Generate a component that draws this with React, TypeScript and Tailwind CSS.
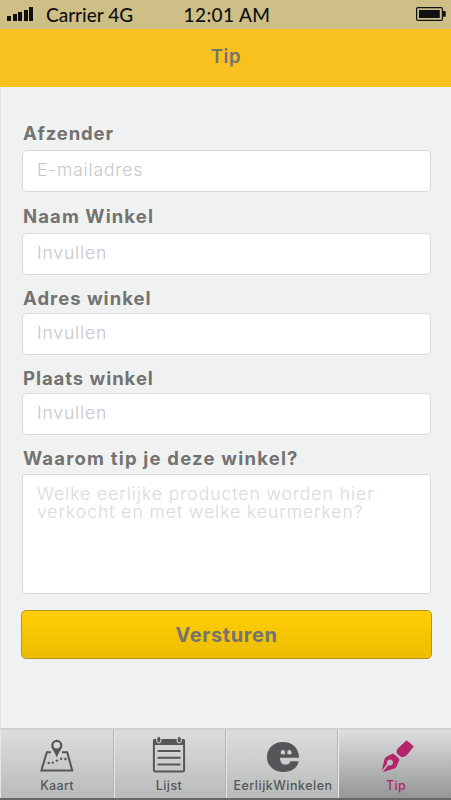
import type { ReactNode } from 'react';

type Field = { id: string; label: string; placeholder: string; spacing: string; tracking: string };

const fields: Field[] = [
  { id: 'afzender', label: 'Afzender', placeholder: 'E-mailadres', spacing: 'mt-0 *:first:leading-[23px]', tracking: 'tracking-[0.85px]' },
  { id: 'naam', label: 'Naam Winkel', placeholder: 'Invullen', spacing: 'mt-[13px] *:first:leading-[23px]', tracking: 'tracking-[1.1px]' },
  { id: 'adres', label: 'Adres winkel', placeholder: 'Invullen', spacing: 'mt-[10px] *:first:leading-[26px]', tracking: 'tracking-[1px]' },
  { id: 'plaats', label: 'Plaats winkel', placeholder: 'Invullen', spacing: 'mt-[10px] *:first:leading-[26px]', tracking: 'tracking-[0.95px]' },
];

function SignalBars() {
  return (
    <div className="-mt-[2px] flex h-[14px] w-[27px] items-end gap-[1.5px]">
      <i className="h-[5px] w-[4px] bg-[#111114]" />
      <i className="h-[7px] w-[4px] bg-[#111114]" />
      <i className="h-[9px] w-[4px] bg-[#111114]" />
      <i className="h-[11px] w-[4px] bg-[#111114]" />
      <i className="h-[14px] w-[4px] bg-[#111114]" />
    </div>
  );
}

function Battery() {
  return (
    <svg width="30" height="14" viewBox="0 0 30 14" className="-mt-[1px]">
      <rect x="0.6" y="0.6" width="25.8" height="12.8" rx="1.2" fill="none" stroke="#111114" strokeWidth="1.2" />
      <rect x="3" y="3" width="20.8" height="8" fill="#111114" />
      <path d="M27 4h2q.7 0 .7.7v4.4q0 .7-.7.7h-2z" fill="#111114" />
    </svg>
  );
}

function MapIcon() {
  return (
    <svg width="36" height="34" viewBox="0 0 36 34">
      <path d="M12 13.2H7.8L2.4 31.4H33.2L28.2 13.2H23" fill="none" stroke="#555659" strokeWidth="2" />
      <path d="M17.8 0.8a5.6 5.6 0 0 0-5.6 5.6c0 3.8 3.5 5.6 5.6 12.2 2.1-6.6 5.6-8.4 5.6-12.2a5.6 5.6 0 0 0-5.6-5.6z" fill="#555659" />
      <circle cx="17.8" cy="6.3" r="3.3" fill="#d6d8d8" />
      <g fill="#555659">
        <circle cx="9.7" cy="24" r="1.2" />
        <circle cx="13.8" cy="23.6" r="1.2" />
        <circle cx="17.9" cy="21.6" r="1.2" />
        <circle cx="22.2" cy="19.8" r="1.2" />
        <circle cx="26.4" cy="20" r="1.2" />
      </g>
    </svg>
  );
}

function ListIcon() {
  return (
    <svg width="34" height="37" viewBox="0 0 34 37">
      <rect x="1.9" y="4" width="30.2" height="31.6" rx="1.4" fill="none" stroke="#555659" strokeWidth="2" />
      <path d="M1 9V4.5Q1 3 2.5 3h29Q33 3 33 4.5V9z" fill="#555659" />
      <g fill="#555659" stroke="#d8dada" strokeWidth="1">
        <rect x="4.8" y="0.5" width="4" height="6.5" rx="2" />
        <rect x="25.2" y="0.5" width="4" height="6.5" rx="2" />
      </g>
      <path d="M5.5 15h23M5.5 21.7h23M5.5 28.4h23" stroke="#555659" strokeWidth="2" />
    </svg>
  );
}

function EerlijkIcon() {
  return (
    <svg width="34" height="32" viewBox="0 0 34 32">
      <path
        d="M33 16.8C33 7 26.5 1 17 1 7.6 1 1 7.2 1 16s6.8 15 16.3 15C25.5 31 31.5 27 32.6 20.3H24.4C23.8 22.4 21.9 23.7 19.4 23.7 16 23.7 14 21.2 14 16.8z"
        fill="#555659"
      />
      <path d="M14.9 13.2v-2.1a2.05 2.05 0 0 1 4.1 0v2.1zM21.3 13.2v-2.1a2.05 2.05 0 0 1 4.1 0v2.1z" fill="#d0d2d2" />
    </svg>
  );
}

function PenIcon() {
  return (
    <svg width="34" height="34" viewBox="0 0 34 34">
      <path d="M25.6 1.2L32.8 7.6 25.5 16.6Q23 18.4 20.8 17.9 16.5 16 15.6 13.2 15.2 11.3 16.8 9.5z" fill="#b3246b" />
      <path
        d="M11.8 14.6Q16 16.8 18.6 20.6L15.2 28.2Q13.8 29.6 11.8 30L1.5 33.2 7.4 26.2A3.1 3.1 0 1 0 6.1 24.7L.7 31.8 3.4 20.6Q3.8 18.5 5.5 17.7z"
        fill="#b3246b"
      />
    </svg>
  );
}

type TabProps = { icon: ReactNode; label: string; tracking: string; inset?: string; iconInset?: string; active?: boolean };

function Tab({ icon, label, tracking, inset = '', iconInset = '', active = false }: TabProps) {
  return (
    <button
      className={`flex flex-col items-center border-l bg-linear-to-b ${inset} ${
        active
          ? 'border-l-[#ececec] from-[#dedfdf] to-[#959698] text-[#b3246b]'
          : 'border-r border-r-[#b2b4b4] border-l-[#e4e5e5] from-[#dcdede] to-[#b9bbbb] text-[#555659]'
      }`}
    >
      <span className={`flex h-[43px] w-full items-end justify-center ${iconInset}`}>{icon}</span>
      <span className={`mt-[5px] text-[12.5px] leading-[16px] font-medium whitespace-nowrap ${tracking}`}>{label}</span>
    </button>
  );
}

export default function App() {
  return (
    <div className="flex h-[800px] w-[451px] flex-col overflow-hidden bg-[#f0f2f1] font-['Inter',sans-serif] text-[#737371]">
      <div className="grid h-[29px] shrink-0 grid-cols-[1fr_auto_1fr] items-center bg-[#cdbf86] pr-[5px] pl-[7px] font-['Lato',sans-serif] text-[19px] font-medium text-[#111114]">
        <div className="flex items-center gap-[12px]">
          <SignalBars />
          <span className="leading-[28px] whitespace-nowrap">Carrier 4G</span>
        </div>
        <span className="pl-[1px] leading-[28px] tracking-[0.4px] whitespace-nowrap">12:01 AM</span>
        <div className="flex justify-end">
          <Battery />
        </div>
      </div>

      <header className="flex h-[58px] shrink-0 items-center justify-center bg-[#f8c11d]">
        <h1 className="-mt-[3px] pl-[1px] text-[18.5px] font-semibold tracking-[0.6px]">Tip</h1>
      </header>

      <form className="flex flex-1 flex-col border-l border-[#e2e4e4] pt-[35px] pr-[20px] pl-[21px]">
        {fields.map((f) => (
          <div key={f.id} className={`flex flex-col ${f.spacing}`}>
            <label htmlFor={f.id} className={`h-[28px] pl-[1px] text-[18.5px] font-bold ${f.tracking}`}>
              {f.label}
            </label>
            <input
              id={f.id}
              placeholder={f.placeholder}
              className="h-[42px] rounded-[5px] border border-[#d8dada] bg-white px-[14px] pb-[3px] text-[17.5px] font-light tracking-[0.85px] placeholder:text-[#c6c6cb]"
            />
          </div>
        ))}
        <label htmlFor="waarom" className="mt-[11px] h-[28px] pl-[1px] text-[18.5px] leading-[24px] font-bold tracking-[1.2px]">
          Waarom tip je deze winkel?
        </label>
        <textarea
          id="waarom"
          placeholder={'Welke eerlijke producten worden hier\nverkocht en met welke keurmerken?'}
          className="h-[120px] resize-none rounded-[3px] border border-[#d8dada] bg-white px-[14px] pt-[10px] text-[17.5px] leading-[18px] font-light tracking-[0.98px] placeholder:text-[#d9d9d9]"
        />
        <button
          type="button"
          className="mt-[16px] -mr-[1px] -ml-[1px] h-[49px] rounded-[5px] border border-[#b6941d] bg-linear-to-b from-[#ffce05] to-[#ecbd00] text-[20px] font-bold tracking-[0.6px] text-[#737371]"
        >
          Versturen
        </button>
      </form>

      <nav className="grid h-[72px] shrink-0 grid-cols-[114px_112px_112px_113px] border-t-2 border-b-2 border-t-[#d0d2d2] border-b-[#66686a]">
        <Tab icon={<MapIcon />} label="Kaart" tracking="tracking-[0.3px]" />
        <Tab icon={<ListIcon />} label="Lijst" tracking="tracking-[0.4px]" inset="pr-[2px]" />
        <Tab icon={<EerlijkIcon />} label="EerlijkWinkelen" tracking="tracking-[0.5px]" inset="pl-[2px]" />
        <Tab icon={<PenIcon />} label="Tip" tracking="tracking-[0.3px]" inset="pl-[2px]" iconInset="pl-[4px]" active />
      </nav>
    </div>
  );
}
